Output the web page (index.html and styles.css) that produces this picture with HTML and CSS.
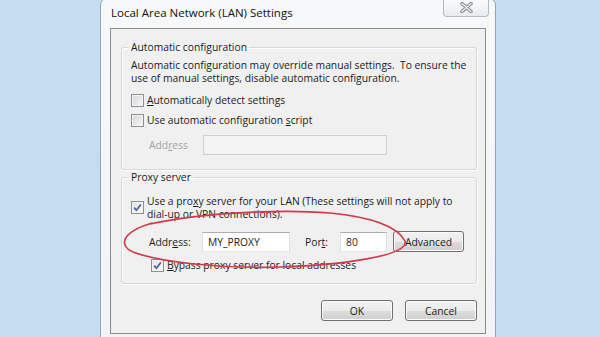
FILE: index.html
```html
<!DOCTYPE html>
<html lang="en">

<head>
    <meta charset="UTF-8">
    <meta name="viewport" content="width=device-width, initial-scale=1.0">
    <title>Local Area Network (LAN) Settings</title>
    <link rel="stylesheet" href="styles.css">
</head>

<body>

    <div class="window">
        <div class="titlebar">
            <span class="title">Local Area Network (LAN) Settings</span>
            <button class="close">
                <svg width="13" height="11" viewBox="0 0 13 11">
                    <path d="M2 1.5 L11 9.5 M11 1.5 L2 9.5" stroke="#86898c" stroke-width="3.4" stroke-linecap="round" />
                    <path d="M2 1.5 L11 9.5 M11 1.5 L2 9.5" stroke="#eef0f2" stroke-width="1.4" stroke-linecap="round" />
                </svg>
            </button>
        </div>

        <div class="client">
            <fieldset class="group auto">
                <legend>Automatic configuration</legend>
                <p class="note">Automatic configuration may override manual settings.&nbsp; To ensure the<br>use of manual settings, disable automatic configuration.</p>
                <label class="check first"><span class="cb"></span><span><u>A</u>utomatically detect settings</span></label>
                <label class="check"><span class="cb"></span><span>Use automatic configuration <u>s</u>cript</span></label>
                <div class="field-row disabled">
                    <span class="field-label">Add<u>r</u>ess</span>
                    <span class="input script-addr"></span>
                </div>
            </fieldset>

            <fieldset class="group proxy">
                <legend>Proxy server</legend>
                <label class="check two-line">
                    <span class="cb on">
                        <svg width="11" height="11" viewBox="0 0 11 11"><path d="M2.2 5.6 L4.4 8.2 L8.8 2.4" fill="none" stroke="#4b5e96" stroke-width="1.7" /></svg>
                    </span>
                    <span>Use a pro<u>x</u>y server for your LAN (These settings will not apply to<br>dial-up or VPN connections).</span>
                </label>
                <div class="field-row proxy-row">
                    <span class="field-label">Addr<u>e</u>ss:</span>
                    <span class="input addr">MY_PROXY</span>
                    <span class="port-label">Por<u>t</u>:</span>
                    <span class="input port">80</span>
                    <button class="btn adv">Advanced</button>
                </div>
                <label class="check bypass">
                    <span class="cb on">
                        <svg width="11" height="11" viewBox="0 0 11 11"><path d="M2.2 5.6 L4.4 8.2 L8.8 2.4" fill="none" stroke="#4b5e96" stroke-width="1.7" /></svg>
                    </span>
                    <span><u>B</u>ypass proxy server for local addresses</span>
                </label>
            </fieldset>

            <div class="actions">
                <button class="btn">OK</button>
                <button class="btn">Cancel</button>
            </div>
        </div>
    </div>

    <!-- red marker circle drawn over the proxy row -->
    <svg class="scribble" width="600" height="337" viewBox="0 0 600 337">
        <path d="M150 224 C200 213, 280 209, 330 213 C372 217, 398 227, 405 241 C410 256, 340 265, 280 267 C220 269, 160 262, 133 252 C118 245, 122 232, 152 223"
            fill="none" stroke="#d23a4c" stroke-width="1.6" stroke-linecap="round" />
    </svg>

</body>

</html>
```

FILE: styles.css
```css
body {
    margin: 0;
    height: 337px;
    overflow: hidden;
    position: relative;
    background-color: #c6dcf1;
    font-family: "Open Sans", "Noto Sans", sans-serif;
    font-size: 10.3px;
    color: #1b1b1b;
}

.window {
    box-sizing: border-box;
    width: 396px;
    height: 350px;
    margin: -2px 0 0 100px;
    padding: 0 9px 0 9px;
    background: linear-gradient(#f7f8fa, #f1f3f6);
    border: 1px solid #9aa3ad;
    border-radius: 7px 7px 0 0;
}

.titlebar {
    display: flex;
    justify-content: space-between;
    align-items: flex-start;
    height: 29px;
}

.title {
    margin: 6px 0 0 1px;
    font-size: 11.5px;
    line-height: 16px;
    color: #111;
}

.close {
    display: flex;
    justify-content: center;
    align-items: center;
    width: 46px;
    height: 18px;
    margin-right: -3px;
    padding: 0;
    border: 1px solid #b4bac2;
    border-top: none;
    border-radius: 0 0 4px 4px;
    background: linear-gradient(#fbfcfd, #e9ecef);
}

.client {
    box-sizing: border-box;
    height: 306px;
    padding: 11px 8px 0 10px;
    background-color: #f0f0f0;
    border: 1px solid #8d8d8d;
}

.group {
    margin: 0;
    padding: 0 9px 14px;
    border: 1px solid #d3d8dc;
    border-radius: 3px;
    box-shadow: inset 1px 1px 0 #fcfcfc, 1px 1px 0 #fcfcfc;
}

.group legend {
    margin-left: -2px;
    padding: 0 2px;
    line-height: 14px;
}

.note {
    margin: 5px 0 0;
    line-height: 12.5px;
}

.check {
    display: flex;
    align-items: center;
    gap: 3px;
    height: 20px;
    line-height: 12.5px;
}

.check.first {
    margin-top: 6px;
}

.cb {
    box-sizing: border-box;
    display: flex;
    justify-content: center;
    align-items: center;
    flex: none;
    width: 13px;
    height: 13px;
    border: 1px solid #8e8f8f;
    background: linear-gradient(135deg, #d2d5d9, #f8f8f8);
    box-shadow: inset 0 0 0 1px #f3f3f3;
}

.cb.on {
    background: linear-gradient(135deg, #dfe3ea, #fbfbfc);
}

.field-row {
    display: flex;
    align-items: center;
    height: 20px;
    margin-top: 5px;
    padding-left: 18px;
}

.field-label {
    width: 54px;
}

.disabled .field-label {
    color: #a3a3a3;
}

.input {
    box-sizing: border-box;
    display: flex;
    align-items: center;
    height: 20px;
    padding-left: 5px;
    background-color: #fff;
    border: 1px solid;
    border-color: #abadb3 #dbdfe6 #e3e9ef #e2e3ea;
}

.script-addr {
    width: 184px;
    background-color: #f3f3f3;
    border-color: #cfcfcf;
}

.group.proxy {
    padding-bottom: 8px;
}

.check.two-line {
    height: 25px;
    margin-top: 11px;
}

.proxy-row {
    height: 21px;
    margin-top: 11px;
}

.proxy-row .field-label {
    width: 53px;
}

.addr {
    width: 88px;
}

.port-label {
    margin-left: 15px;
    width: 35px;
}

.port {
    width: 47px;
}

.btn {
    box-sizing: border-box;
    height: 21px;
    padding: 0;
    font-family: inherit;
    font-size: 10.3px;
    color: #1b1b1b;
    border: 1px solid #707070;
    border-radius: 3px;
    background: linear-gradient(#f2f2f2 0%, #ebebeb 50%, #dddddd 51%, #cfcfcf 100%);
    box-shadow: inset 0 0 0 1px #fbfbfb;
}

.adv {
    width: 71px;
    margin-left: 6px;
}

.check.bypass {
    margin-top: 3px;
    padding-left: 20px;
}

.actions {
    display: flex;
    justify-content: flex-end;
    gap: 12px;
    margin-top: 16px;
}

.actions .btn {
    width: 72px;
}

.scribble {
    position: absolute;
    top: 0;
    left: 0;
    pointer-events: none;
}
```
